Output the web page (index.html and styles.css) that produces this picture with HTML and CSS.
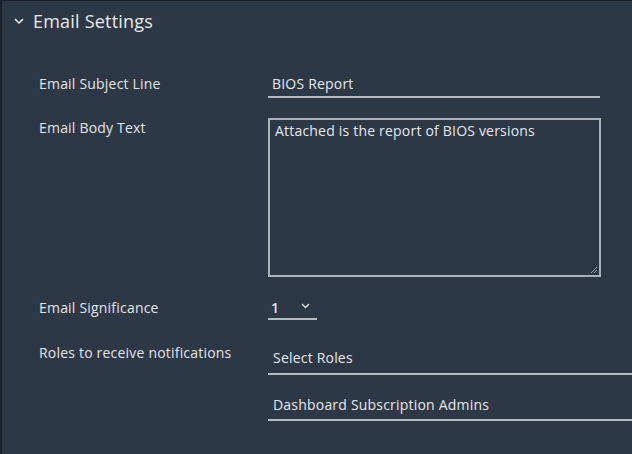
FILE: index.html
```html
<!DOCTYPE html>
<html>
<head>
<meta charset="utf-8">
<link rel="stylesheet" href="styles.css">
</head>
<body>
<div class="panel">
  <div class="header">
    <svg class="chev" width="10" height="7" viewBox="0 0 10 7"><path d="M1 1.2 L5 5 L9 1.2" fill="none" stroke="#e8e8e8" stroke-width="1.6"/></svg>
    <span class="title">Email Settings</span>
  </div>
  <div class="form">
    <div class="row r-subject">
      <div class="label">Email Subject Line</div>
      <div class="field"><div class="input w-short">BIOS Report</div></div>
    </div>
    <div class="row r-body">
      <div class="label">Email Body Text</div>
      <div class="field">
        <div class="textarea">Attached is the report of BIOS versions
          <svg class="grip" width="8" height="8" viewBox="0 0 8 8"><path d="M7 1 L1 7 M7 4 L4 7" stroke="#9aa3ad" stroke-width="1"/></svg>
        </div>
      </div>
    </div>
    <div class="row r-sig">
      <div class="label">Email Significance</div>
      <div class="field">
        <div class="select">1
          <svg class="selchev" width="9" height="6" viewBox="0 0 9 6"><path d="M1 1 L4.5 4.5 L8 1" fill="none" stroke="#d8dde2" stroke-width="1.4"/></svg>
        </div>
      </div>
    </div>
    <div class="row r-roles">
      <div class="label">Roles to receive notifications</div>
      <div class="field stack">
        <div class="input w-full roles">Select Roles</div>
        <div class="input w-full dash">Dashboard Subscription Admins</div>
      </div>
    </div>
  </div>
</div>
</body>
</html>
```
FILE: styles.css
```css
html, body {
  margin: 0;
  padding: 0;
  background: #2d3847;
}
body {
  font-family: "Open Sans", Lato, sans-serif;
  color: #e4e6e8;
  width: 632px;
  height: 454px;
  overflow: hidden;
}
.panel {
  width: 632px;
  height: 454px;
  box-sizing: border-box;
  border-left: 2px solid #1a2029;
  border-top: 1px solid #1a2029;
  background: #2d3847;
}
.header {
  display: flex;
  align-items: center;
  height: 40px;
  padding-left: 12px;
}
.chev {
  margin-right: 9px;
  margin-top: 1px;
}
.title {
  font-size: 18px;
  letter-spacing: 0.2px;
  color: #e8e9ea;
}
.form {
  padding-top: 34px;
}
.row {
  display: flex;
}
.label {
  width: 229px;
  padding-left: 37px;
  font-size: 14px;
  letter-spacing: 0.2px;
  line-height: 18px;
  color: #e2e4e6;
  flex-shrink: 0;
}
.field {
  flex: 1;
}
.input {
  font-size: 14px;
  letter-spacing: 0.2px;
  line-height: 18px;
  padding-left: 4px;
  padding-bottom: 3px;
  border-bottom: 2px solid #b4bcc4;
  color: #e6e8ea;
}
.w-short { width: 328px; }
.w-full { width: auto; }
.r-body { margin-top: 20px; }
.r-body .label { padding-top: 1px; }
.textarea {
  position: relative;
  width: 319px;
  height: 151px;
  border: 2px solid #aab2ba;
  padding: 2px 5px;
  font-size: 14px;
  letter-spacing: 0.2px;
  line-height: 18px;
  color: #e6e8ea;
}
.grip {
  position: absolute;
  right: 1px;
  bottom: 1px;
}
.r-sig { margin-top: 22px; }
.select {
  display: flex;
  align-items: center;
  width: 46px;
  padding-left: 3px;
  padding-bottom: 1px;
  border-bottom: 2px solid #b4bcc4;
  font-size: 14px;
  line-height: 18px;
  font-weight: 600;
  gap: 22px;
}
.selchev { margin-top: -4px; }
.r-roles { margin-top: 24px; }
.stack {
  display: flex;
  flex-direction: column;
}
.roles {
  margin-top: 5px;
  padding-bottom: 6px;
  padding-left: 5px;
}
.dash {
  margin-top: 21px;
  padding-bottom: 5px;
  padding-left: 5px;
}
```
